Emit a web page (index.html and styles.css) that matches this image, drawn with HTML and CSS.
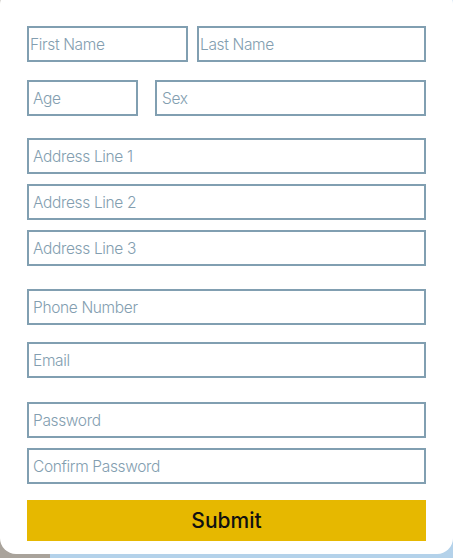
FILE: index.html
```html
<!DOCTYPE html>
<html lang="en">
<head>
<meta charset="utf-8">
<title>Form</title>
<link rel="stylesheet" href="styles.css">
</head>
<body>
<div class="card">
  <form class="form">
    <div class="row row-name">
      <input class="field tight w-first" type="text" placeholder="First Name">
      <input class="field tight w-last" type="text" placeholder="Last Name">
    </div>
    <div class="row row-age">
      <input class="field w-age" type="text" placeholder="Age">
      <input class="field w-sex" type="text" placeholder="Sex">
    </div>
    <div class="group g-address">
      <input class="field" type="text" placeholder="Address Line 1">
      <input class="field" type="text" placeholder="Address Line 2">
      <input class="field" type="text" placeholder="Address Line 3">
    </div>
    <div class="group g-phone">
      <input class="field" type="text" placeholder="Phone Number">
    </div>
    <div class="group g-email">
      <input class="field" type="text" placeholder="Email">
    </div>
    <div class="group g-pass">
      <input class="field" type="password" placeholder="Password">
      <input class="field" type="password" placeholder="Confirm Password">
    </div>
    <button class="submit" type="button">Submit</button>
  </form>
</div>
</body>
</html>
```
FILE: styles.css
```css
html, body {
  margin: 0;
  padding: 0;
}
body {
  width: 453px;
  height: 558px;
  overflow: hidden;
  background: linear-gradient(to right, #a9a39b 0, #a9a39b 50px, #b4d2ea 50px, #b4d2ea 100%);
  font-family: "Inter", "Noto Sans", sans-serif;
}
.card {
  margin-top: -12px;
  height: 566px;
  box-sizing: border-box;
  background: #ffffff;
  border-radius: 16px;
  padding: 38px 27px 0 27px;
}
.form {
  display: flex;
  flex-direction: column;
}
.row {
  display: flex;
}
.row-name { gap: 9px; }
.row-age { gap: 17px; margin-top: 18px; }
.group {
  display: flex;
  flex-direction: column;
  gap: 10px;
}
.g-address { margin-top: 22px; }
.g-phone { margin-top: 23px; }
.g-email { margin-top: 17px; }
.g-pass { margin-top: 24px; }
.field {
  box-sizing: border-box;
  height: 36px;
  width: 399px;
  margin: 0;
  border: 2px solid #819fb1;
  border-radius: 0;
  background: #fff;
  padding: 0 4px;
  font-family: "Inter", "Noto Sans", sans-serif;
  font-size: 15.5px;
  font-weight: 300;
  letter-spacing: -0.35px;
  color: #3d5566;
  outline: none;
}
.field::placeholder {
  color: #839eb0;
  opacity: 1;
}
.tight { padding: 0 1px; }
.w-first { width: 161px; }
.w-last { width: 229px; }
.w-age { width: 111px; }
.w-sex { width: 271px; padding-left: 5px; }
.submit {
  margin-top: 16px;
  width: 399px;
  height: 41px;
  border: none;
  border-radius: 0;
  background: #e6b800;
  color: #111;
  font-family: "Inter", "Noto Sans", sans-serif;
  font-size: 21px;
  font-weight: 500;
  padding: 0;
  cursor: pointer;
}
```
